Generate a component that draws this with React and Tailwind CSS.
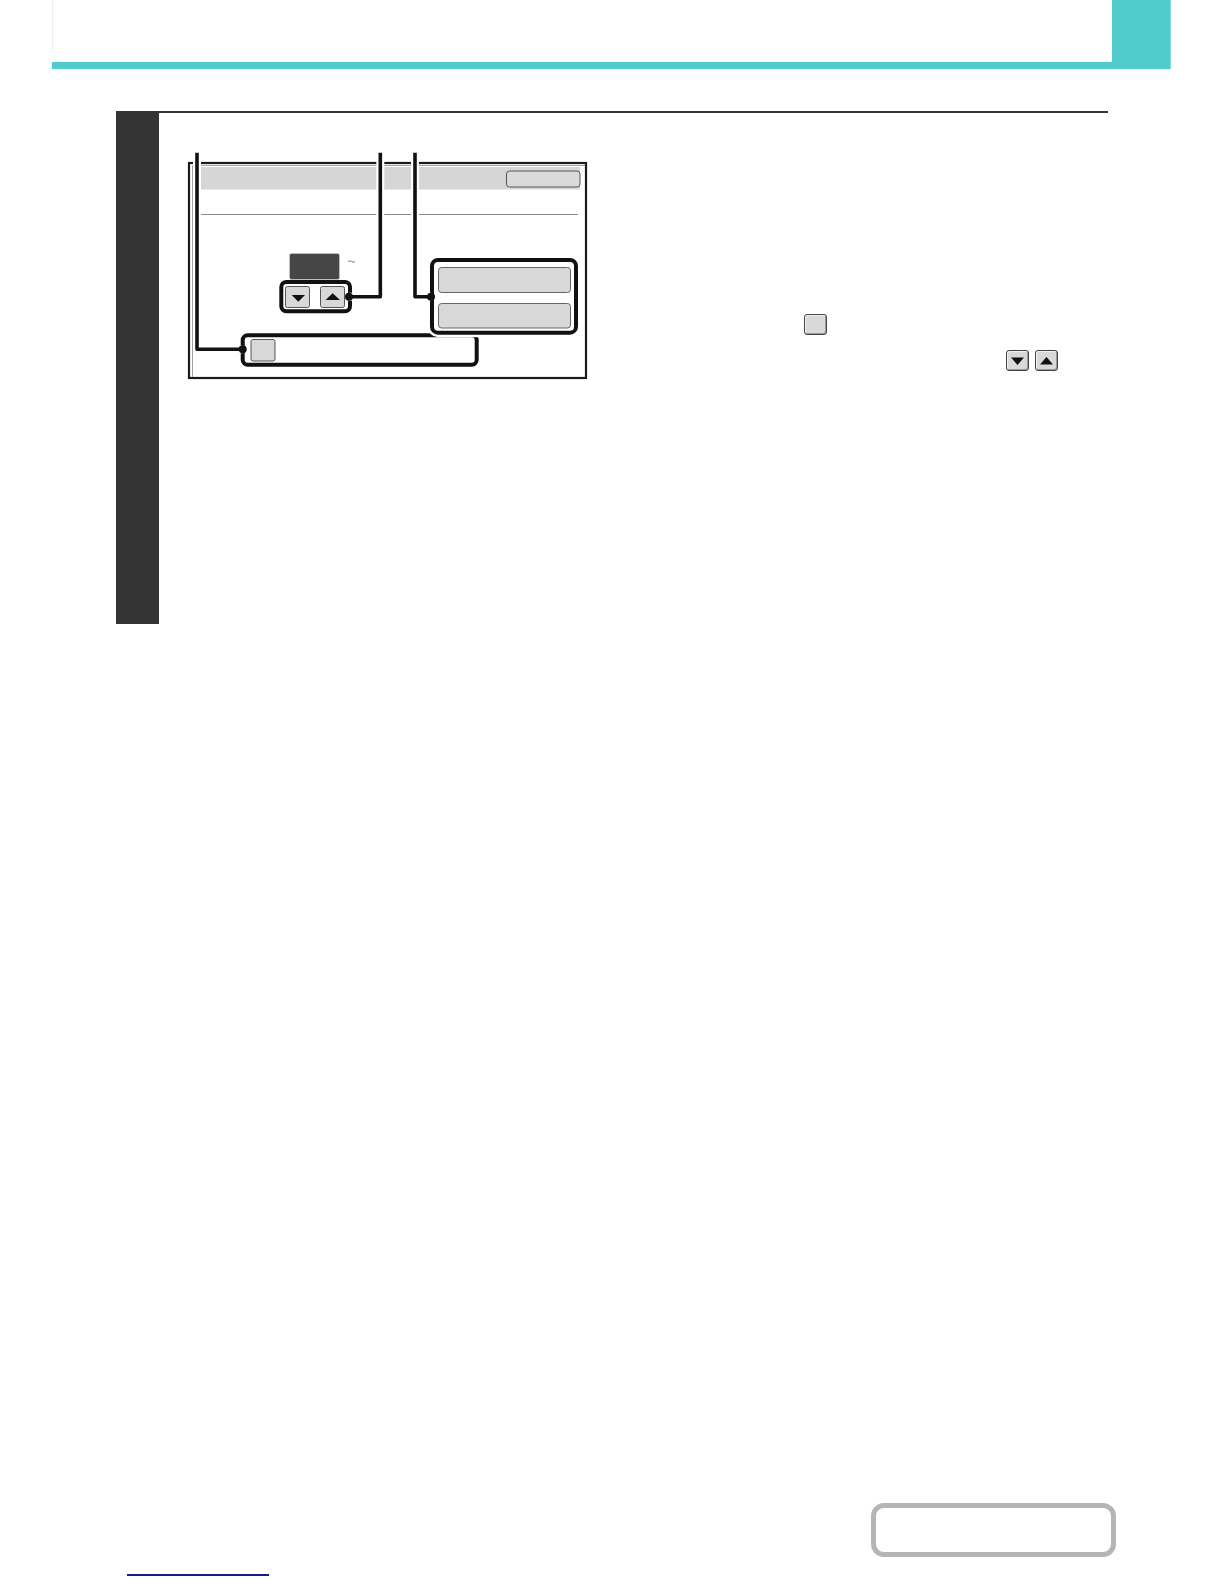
import React from "react";

function Btn({ children, className = "" }) {
  return (
    <div
      className={`flex items-center justify-center bg-[#d9d9d9] border border-[#444] rounded-[3px] shadow-[inset_-1px_-1px_0_#9a9a9a,inset_1px_1px_0_#f2f2f2] ${className}`}
    >
      {children}
    </div>
  );
}

function Tri({ up }) {
  return (
    <svg width="13" height="8" viewBox="0 0 13 8">
      {up ? <polygon points="0,7.5 13,7.5 6.5,0" fill="#111" /> : <polygon points="0,0.5 13,0.5 6.5,8" fill="#111" />}
    </svg>
  );
}

function Diagram() {
  const btnFill = "#d8d8d8";
  return (
    <svg width="404" height="232" viewBox="0 0 404 232" className="block">
      {/* frame */}
      <rect x="3" y="13" width="397" height="215" fill="#fff" stroke="#1a1a1a" strokeWidth="2.2" />
      <polyline points="6.5,227 6.5,15.5 399,15.5" fill="none" stroke="#a0a0a0" strokeWidth="1" />
      {/* title bar */}
      <rect x="15" y="17" width="379" height="22.5" fill="#d6d6d6" />
      <rect x="320.5" y="21" width="73.5" height="16" rx="3" fill="#dadada" stroke="#555" strokeWidth="1" />
      {/* separator line */}
      <line x1="15" y1="64.5" x2="392" y2="64.5" stroke="#8a8a8a" strokeWidth="1" />
      {/* display */}
      <rect x="103.5" y="103.5" width="50" height="26" rx="2" fill="#464646" stroke="#bdbdbd" strokeWidth="1" />
      <path d="M162 111.5 q1.7 -1.3 3.5 0 t3.5 0" fill="none" stroke="#666" strokeWidth="0.9" />
      {/* arrow group */}
      <rect x="95.3" y="132" width="68.7" height="29.3" rx="5" fill="#fff" stroke="#111" strokeWidth="4" />
      <rect x="99.5" y="136.5" width="24" height="21" rx="2" fill={btnFill} stroke="#555" strokeWidth="1" />
      <polygon points="105.7,145 119,145 112.3,151.7" fill="#111" />
      <rect x="134.5" y="136.5" width="24" height="21" rx="2" fill={btnFill} stroke="#555" strokeWidth="1" />
      <polygon points="139.5,150 154,150 146.7,143.3" fill="#111" />
      {/* bottom group */}
      <rect x="56.7" y="185.3" width="234" height="29.4" rx="5" fill="none" stroke="#111" strokeWidth="4" />
      <rect x="65" y="189.5" width="24" height="21.5" rx="2" fill={btnFill} stroke="#555" strokeWidth="1" />
      {/* right group */}
      <rect x="246" y="110" width="144" height="72.7" rx="6" fill="#fff" stroke="#fff" strokeWidth="9" />
      <rect x="246" y="110" width="144" height="72.7" rx="6" fill="#fff" stroke="#111" strokeWidth="4" />
      <rect x="252.5" y="117.5" width="132" height="25" rx="3" fill={btnFill} stroke="#666" strokeWidth="1" />
      <rect x="252.5" y="153.5" width="132" height="24.5" rx="3" fill={btnFill} stroke="#666" strokeWidth="1" />
      {/* callout halos */}
      <g fill="none" stroke="#fff" strokeWidth="8" strokeLinejoin="round">
        <path d="M11 6 V199.3 H56.7" />
        <path d="M194.3 6 V146.7 H163" />
        <path d="M229 6 V146.7 H245" />
      </g>
      {/* callouts */}
      <g fill="none" stroke="#111" strokeWidth="3.6" strokeLinejoin="round">
        <path d="M11 2.7 V199.3 H56.7" />
        <path d="M194.3 2.7 V146.7 H163" />
        <path d="M229 2.7 V146.7 H245" />
      </g>
      <g fill="#111">
        <circle cx="56.7" cy="199.3" r="4" />
        <circle cx="163" cy="146.7" r="4" />
        <circle cx="245" cy="146.7" r="4" />
      </g>
    </svg>
  );
}

export default function App() {
  return (
    <div
      className="relative w-[1224px] h-[1584px] bg-white overflow-hidden"
      style={{ fontFamily: '"Liberation Sans", Arial, sans-serif' }}
    >
      {/* header */}
      <div className="ml-[52px] w-[1119px] flex">
        <div className="flex-1 flex flex-col">
          <div className="h-[62px]">
            <div className="h-[50px] border-l border-[#eeeeee]" />
          </div>
          <div className="h-[7px] bg-[#51cbcb]" />
        </div>
        <div className="w-[59px] h-[69px] bg-[#51cbcb] border-r border-[#7fdada]" />
      </div>

      {/* step section */}
      <div className="mt-[42px] ml-[116px] flex">
        <div className="w-[43px] h-[513px] bg-[#343434]" />
        <div className="w-[949px] border-t-2 border-[#333]">
          <div className="flex items-start">
            <div className="ml-[27px] mt-[37px]">
              <Diagram />
            </div>
            <div className="ml-[30px] mt-[201px] flex flex-col">
              <Btn className="ml-[184px] w-[23px] h-[21px]" />
              <div className="mt-[15px] ml-[386px] flex gap-[6px]">
                <Btn className="w-[23px] h-[21px]">
                  <Tri />
                </Btn>
                <Btn className="w-[23px] h-[21px]">
                  <Tri up />
                </Btn>
              </div>
            </div>
          </div>
        </div>
      </div>

      {/* bottom rounded box */}
      <div className="mt-[879px] ml-[871px] w-[245px] h-[54px] border-[5px] border-[#b5b5b5] rounded-[13px]" />
      {/* blue underline */}
      <div className="mt-[17px] ml-[127px] w-[142px] h-[2px] bg-[#1a1a8c]" />
    </div>
  );
}
